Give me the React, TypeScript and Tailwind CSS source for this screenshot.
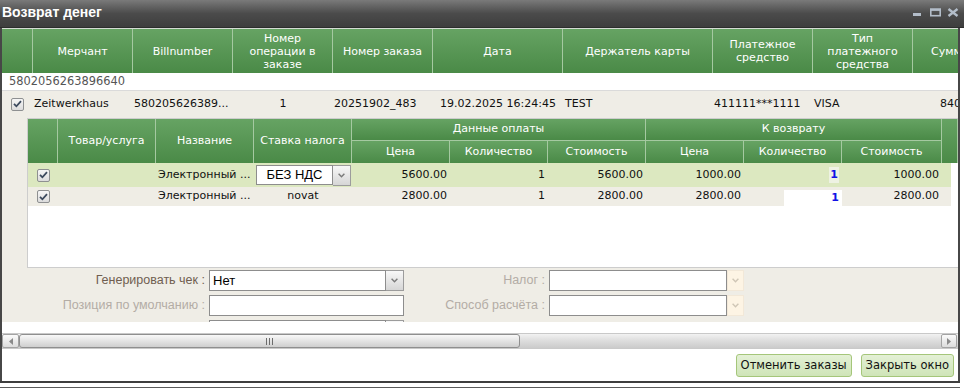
import React from 'react';

const mainCols = [
  { label: '', w: 'w-[31px] justify-center' },
  { label: 'Мерчант', w: 'w-[100px] justify-center' },
  { label: 'Billnumber', w: 'w-[100px] justify-center' },
  { label: 'Номер операции в заказе', w: 'w-[100px] justify-center' },
  { label: 'Номер заказа', w: 'w-[100px] justify-center' },
  { label: 'Дата', w: 'w-[130px] justify-center' },
  { label: 'Держатель карты', w: 'w-[150px] justify-center' },
  { label: 'Платежное средство', w: 'w-[100px] justify-center' },
  { label: 'Тип платежного средства', w: 'w-[100px] justify-center' },
  { label: 'Сумма', w: 'w-[100px] justify-start !pl-[18px]' },
];

const items = [
  { name: 'Электронный ...', tax: null, price: '5600.00', qty: '1', sum: '5600.00', rPrice: '1000.00', rQty: '1', rSum: '1000.00', active: true },
  { name: 'Электронный ...', tax: 'novat', price: '2800.00', qty: '1', sum: '2800.00', rPrice: '2800.00', rQty: '1', rSum: '2800.00', active: false },
];

const Check = () => (
  <span className="w-[13px] h-[13px] border border-[#8e9091] rounded-[2px] bg-linear-to-b from-[#f6f6f6] to-[#dcdcdc] flex items-center justify-center">
    <svg width="9" height="8" viewBox="0 0 9 8">
      <path d="M1 3.8 L3.4 6.3 L8 1.2" fill="none" stroke="#3c4a5e" strokeWidth="1.8" />
    </svg>
  </span>
);

const Chevron = ({ color }: { color: string }) => (
  <svg width="7" height="5" viewBox="0 0 7 5">
    <path d="M0.6 0.8 L3.5 3.8 L6.4 0.8" fill="none" stroke={color} strokeWidth="1.4" />
  </svg>
);

const Select = ({ box, value, disabled }: { box: string; value?: string; disabled?: boolean }) => (
  <div className="flex h-[21px]">
    <div className={`${box} border border-[#8d8d8d] bg-white flex items-center pl-[3px] text-black text-[13px] font-['Liberation_Sans',Arial,sans-serif]`}>
      {value}
    </div>
    {disabled ? (
      <div className="w-[17px] border border-[#f2e8d8] bg-[#fdf4e4] flex items-center justify-center">
        <Chevron color="#cfc6b6" />
      </div>
    ) : (
      <div className="w-[18px] border border-l-0 border-[#9c9c9c] bg-linear-to-b from-[#f8f8f8] to-[#d6d6d6] flex items-center justify-center">
        <Chevron color="#7a7a7a" />
      </div>
    )}
  </div>
);

const hCell = 'shrink-0 flex items-center justify-center text-center border-r border-[#a5c9a1] bg-linear-to-b from-[#66a363] to-[#4a8a47]';

export default function App() {
  return (
    <div className="w-[964px] h-[390px] overflow-hidden bg-white font-['DejaVu_Sans',Verdana,sans-serif] text-[11px] text-[#111]">
      {/* title bar */}
      <div className="h-[28px] flex items-start justify-between pl-[2px] pr-[5px] bg-linear-to-b from-[#7a7a7a] via-[#4b4b4b] to-[#3e3e3e] border-b border-[#2d2d2d]">
        <span className="pt-[2px] text-white font-bold text-[14px] font-['Liberation_Sans',Arial,sans-serif]">Возврат денег</span>
        <svg className="mt-[8px]" width="46" height="9" viewBox="0 0 46 9">
          <rect x="0" y="5" width="8" height="3" fill="#b3bdc9" />
          <rect x="17.8" y="1.3" width="9.4" height="6.4" fill="none" stroke="#b3bdc9" strokeWidth="1.6" />
          <rect x="17" y="0.5" width="11" height="2.4" fill="#b3bdc9" />
          <path d="M35.5 1 L44.5 8 M44.5 1 L35.5 8" stroke="#b3bdc9" strokeWidth="2.4" />
        </svg>
      </div>

      <div className="flex w-[960px]">
        <div className="w-[2px] bg-[#474747]" />
        <div className="w-[956px] flex flex-col">
          {/* grid body */}
          <div className="h-[294px] overflow-hidden bg-[#efede6]">
            <div className="w-[1011px]">
              <div className="flex h-[45px] border-t border-[#d4dcd3] text-white leading-[13px]">
                {mainCols.map((c, i) => (
                  <div key={i} className={`${hCell} ${c.w} px-[8px]`}>{c.label}</div>
                ))}
              </div>
              <div className="h-[18px] bg-white border-b border-[#dadada] pl-[7px] flex items-center text-[11.4px] text-[#555]">
                5802056263896640
              </div>
              <div className="flex h-[26px] items-center">
                <div className="w-[31px] flex justify-center"><Check /></div>
                <div className="w-[100px] pl-[1px]">Zeitwerkhaus</div>
                <div className="w-[100px] pl-[1px]">580205626389...</div>
                <div className="w-[100px] text-center">1</div>
                <div className="w-[100px] pl-[1px]">20251902_483</div>
                <div className="w-[130px] text-center">19.02.2025 16:24:45</div>
                <div className="w-[150px] pl-[2px]">TEST</div>
                <div className="w-[100px] pl-[1px]">411111***1111</div>
                <div className="w-[100px] pl-[1px]">VISA</div>
                <div className="w-[100px] pl-[27px]">840.00</div>
              </div>
            </div>

            {/* nested items grid */}
            <div className="mt-[1px] ml-[25px] w-[931px] h-[150px] border border-r-0 border-[#cdcdcd] bg-white flex flex-col">
              <div className="flex h-[44px] text-white">
                <div className={`w-[30px] ${hCell}`} />
                <div className={`w-[98px] ${hCell}`}>Товар/услуга</div>
                <div className={`w-[98px] ${hCell}`}>Название</div>
                <div className={`w-[98px] ${hCell}`}>Ставка налога</div>
                <div className="w-[294px] flex flex-col">
                  <div className={`h-[22px] border-b ${hCell}`}>Данные оплаты</div>
                  <div className="flex flex-1">
                    <div className={`w-[98px] ${hCell}`}>Цена</div>
                    <div className={`w-[98px] ${hCell}`}>Количество</div>
                    <div className={`w-[98px] ${hCell}`}>Стоимость</div>
                  </div>
                </div>
                <div className="w-[296px] flex flex-col">
                  <div className={`h-[22px] border-b ${hCell}`}>К возврату</div>
                  <div className="flex flex-1">
                    <div className={`w-[98px] ${hCell}`}>Цена</div>
                    <div className={`w-[98px] ${hCell}`}>Количество</div>
                    <div className={`w-[100px] ${hCell}`}>Стоимость</div>
                  </div>
                </div>
                <div className={`w-[16px] ${hCell}`} />
              </div>

              {items.map((r, i) => (
                <div key={i} className={`flex w-[923px] ${r.active ? 'h-[24px] bg-[#dce8c0]' : 'h-[19px] bg-[#efede5]'}`}>
                  <div className="w-[30px] flex items-center justify-center"><Check /></div>
                  <div className="w-[98px]" />
                  <div className="w-[98px] pl-[2px] flex items-center">{r.name}</div>
                  <div className="w-[98px] flex items-center justify-center">
                    {r.tax ? r.tax : <div className="pl-[2px] w-full"><Select box="w-[77px] h-[20px] justify-center !pl-0" value="БЕЗ НДС" /></div>}
                  </div>
                  <div className="w-[98px] pr-[3px] flex items-center justify-end">{r.price}</div>
                  <div className="w-[98px] pr-[3px] flex items-center justify-end">{r.qty}</div>
                  <div className="w-[98px] pr-[3px] flex items-center justify-end">{r.sum}</div>
                  <div className="w-[98px] pr-[3px] flex items-center justify-end">{r.rPrice}</div>
                  <div className="w-[98px] flex items-end justify-end">
                    {r.active ? (
                      <span className="mb-[4px] mr-[3px] px-[1px] bg-[#eef2e3] font-bold text-[#1212e6]">{r.rQty}</span>
                    ) : (
                      <span className="w-[58px] h-[16px] bg-white flex items-center justify-end pr-[3px] font-bold text-[#1212e6]">{r.rQty}</span>
                    )}
                  </div>
                  <div className="w-[100px] pr-[3px] flex items-center justify-end">{r.rSum}</div>
                </div>
              ))}
            </div>

            {/* receipt form */}
            <div className="pt-[2px] flex flex-col gap-[4px] font-['Liberation_Sans',Arial,sans-serif] text-[12.5px]">
              <div className="flex items-center h-[21px]">
                <div className="w-[203px] text-right text-[#6f5e50]">Генерировать чек :</div>
                <div className="ml-[4px]"><Select box="w-[177px]" value="Нет" /></div>
                <div className="w-[141px] text-right text-[#b3aca5]">Налог :</div>
                <div className="ml-[4px]"><Select box="w-[178px]" disabled /></div>
              </div>
              <div className="flex items-center h-[21px]">
                <div className="w-[203px] text-right text-[#b3aca5]">Позиция по умолчанию :</div>
                <div className="ml-[4px] w-[195px] h-[21px] border border-[#8d8d8d] bg-white" />
                <div className="w-[141px] text-right text-[#b3aca5]">Способ расчёта :</div>
                <div className="ml-[4px]"><Select box="w-[178px]" disabled /></div>
              </div>
              <div className="flex items-center h-[21px]">
                <div className="w-[203px]" />
                <div className="ml-[4px]"><Select box="w-[177px]" /></div>
              </div>
            </div>
          </div>

          {/* horizontal scrollbar */}
          <div className="mt-[11px] h-[16px] flex bg-linear-to-b from-[#f2f2f2] via-[#dcdcdc] to-[#cbcbcb] border-y border-[#c9c9c9]">
            <div className="w-[17px] border border-[#a3a3a3] rounded-[2px] bg-linear-to-b from-[#fbfbfb] to-[#dcdcdc] flex items-center justify-center">
              <svg width="4" height="7" viewBox="0 0 4 7"><path d="M4 0 L0 3.5 L4 7 Z" fill="#8a8a8a" /></svg>
            </div>
            <div className="w-[501px] border border-[#8f8f8f] rounded-[3px] bg-linear-to-b from-[#f9f9f9] to-[#cfcfcf] flex items-center justify-center">
              <svg width="7" height="7" viewBox="0 0 7 7">
                <path d="M0.5 0 V7 M3.5 0 V7 M6.5 0 V7" stroke="#6c6c6c" strokeWidth="1" />
              </svg>
            </div>
            <div className="flex-1" />
            <div className="w-[16px] mr-[1px] border border-[#a3a3a3] rounded-[2px] bg-linear-to-b from-[#fbfbfb] to-[#dcdcdc] flex items-center justify-center">
              <svg width="4" height="7" viewBox="0 0 4 7"><path d="M0 0 L4 3.5 L0 7 Z" fill="#8a8a8a" /></svg>
            </div>
          </div>

          {/* buttons */}
          <div className="h-[32px] flex items-start justify-end gap-[9px] pt-[5px] pr-[4px] text-[11.5px]">
            <button className="h-[23px] px-[4px] border border-[#a5c67a] rounded-[3px] bg-linear-to-b from-[#e4f0d6] via-[#d9ebc6] to-[#cfe4b8] text-[#111]">Отменить заказы</button>
            <button className="h-[23px] px-[4px] border border-[#a5c67a] rounded-[3px] bg-linear-to-b from-[#e4f0d6] via-[#d9ebc6] to-[#cfe4b8] text-[#111]">Закрыть окно</button>
          </div>
        </div>
        <div className="w-[2px] bg-[#474747]" />
      </div>
      <div className="w-[960px] h-[2px] bg-[#3e3e3e]" />
      <div className="h-[4px]" />
      <div className="w-[960px] h-[1px] bg-[#5a5a5a]" />
    </div>
  );
}
